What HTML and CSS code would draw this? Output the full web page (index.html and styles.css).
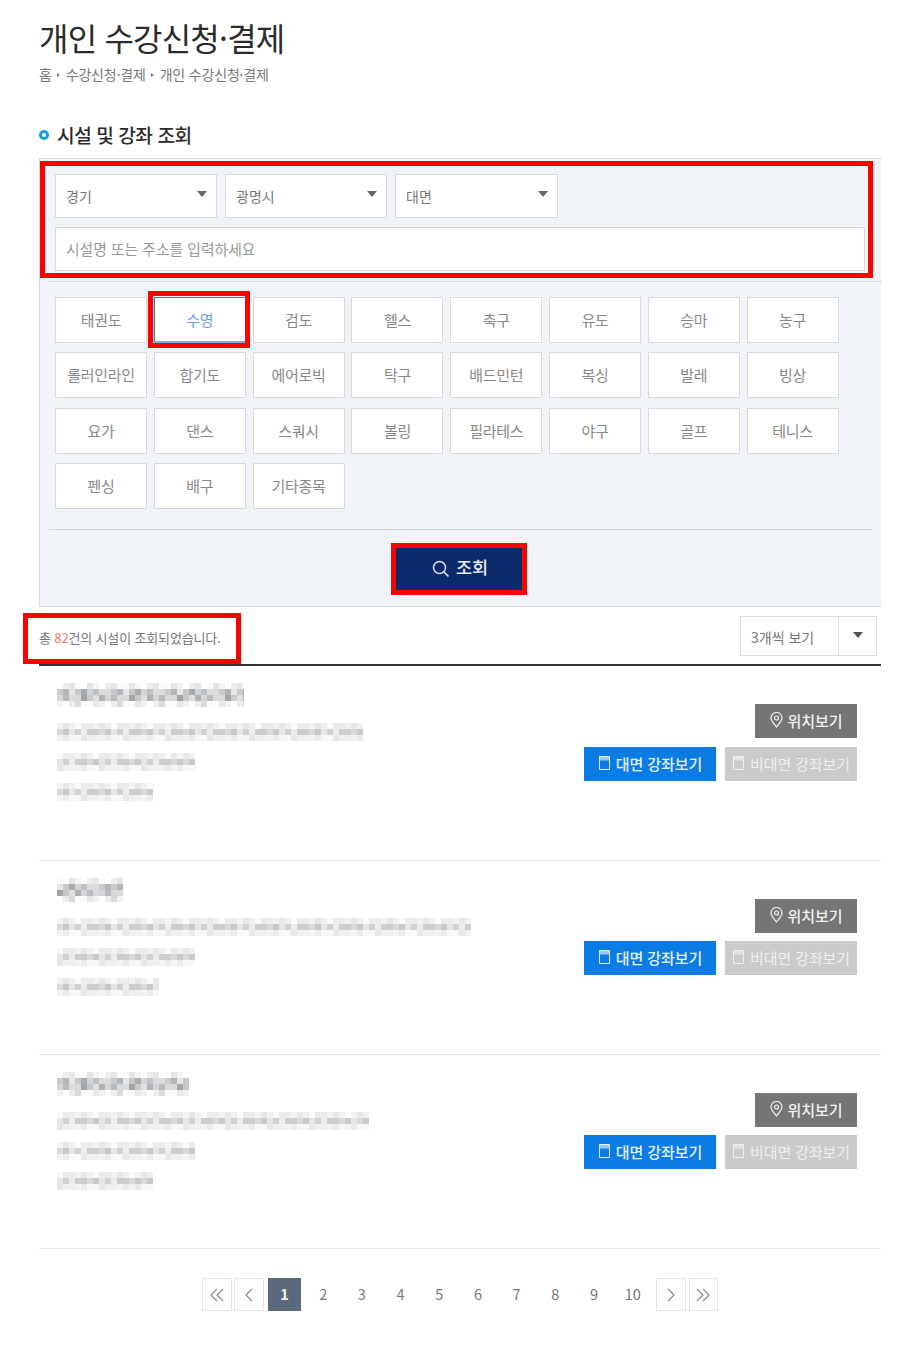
FILE: index.html
```html
<!DOCTYPE html>
<html lang="ko">
<head>
<meta charset="utf-8">
<title>개인 수강신청·결제</title>
<link rel="stylesheet" href="styles.css">
</head>
<body>
<main class="page">
  <h1 class="title">개인 수강신청·결제</h1>
  <nav class="crumbs"><span>홈</span><i class="crumb-arrow"></i><span>수강신청·결제</span><i class="crumb-arrow"></i><span>개인 수강신청·결제</span></nav>
  <h2 class="section"><i class="ring"></i>시설 및 강좌 조회</h2>
  <section class="panel">
    <div class="filters">
      <div class="selects">
        <div class="select s1">경기<i class="caret"></i></div>
        <div class="select s2">광명시<i class="caret"></i></div>
        <div class="select s3">대면<i class="caret"></i></div>
      </div>
      <div class="search">시설명 또는 주소를 입력하세요</div>
      <div class="hl hl-filters"></div>
    </div>
    <div class="rule"></div>
    <div class="sports">
      <button class="sport">태권도</button>
      <button class="sport on">수영<span class="hl hl-sport"></span></button>
      <button class="sport">검도</button>
      <button class="sport">헬스</button>
      <button class="sport">축구</button>
      <button class="sport">유도</button>
      <button class="sport">승마</button>
      <button class="sport">농구</button>
      <button class="sport">롤러인라인</button>
      <button class="sport">합기도</button>
      <button class="sport">에어로빅</button>
      <button class="sport">탁구</button>
      <button class="sport">배드민턴</button>
      <button class="sport">복싱</button>
      <button class="sport">발레</button>
      <button class="sport">빙상</button>
      <button class="sport">요가</button>
      <button class="sport">댄스</button>
      <button class="sport">스쿼시</button>
      <button class="sport">볼링</button>
      <button class="sport">필라테스</button>
      <button class="sport">야구</button>
      <button class="sport">골프</button>
      <button class="sport">테니스</button>
      <button class="sport">펜싱</button>
      <button class="sport">배구</button>
      <button class="sport">기타종목</button>
    </div>
    <div class="rule2"></div>
    <div class="go-row">
      <button class="go">
        <svg class="go-icon" viewBox="0 0 18 18" width="18" height="18"><circle cx="7.500" cy="7.500" r="6" fill="none" stroke="#dfe5ef" stroke-width="1.500"/><path d="M12 12l4.500 4.500" stroke="#dfe5ef" stroke-width="1.600" fill="none"/></svg>
        조회<span class="hl hl-go"></span>
      </button>
    </div>
  </section>
  <div class="summary">
    <p class="count">총 <em>82</em>건의 시설이 조회되었습니다.<span class="hl hl-count"></span></p>
    <div class="perpage"><span class="pp-label">3개씩 보기</span><span class="pp-btn"><i class="caret dark"></i></span></div>
  </div>

  <article class="item first">
    <div class="info">
      <div class="mosaic m-name" style="width:187px"></div>
      <div class="mosaic m-line" style="width:306px"></div>
      <div class="mosaic m-line alt" style="width:138px"></div>
      <div class="mosaic m-line" style="width:96px"></div>
    </div>
    <div class="actions">
      <a class="btn map"><svg class="pin" viewBox="0 0 13 16" width="13" height="16"><path d="M6.500 15C3.500 11 1 8.800 1 6a5.500 5.500 0 0 1 11 0C12 8.800 9.500 11 6.500 15z" fill="none" stroke="currentColor" stroke-width="1.200"/><circle cx="6.500" cy="6" r="2" fill="none" stroke="currentColor" stroke-width="1.200"/></svg>위치보기</a>
      <div class="btn-row">
        <a class="btn live"><svg class="book" viewBox="0 0 13 16" width="13" height="16"><path d="M1.500 1.500h10v13h-10z" fill="none" stroke="currentColor"/><path d="M1.500 1.500h10v4h-10z" fill="currentColor" opacity=".65"/></svg>대면 강좌보기</a>
        <a class="btn off"><svg class="book" viewBox="0 0 13 16" width="13" height="16"><path d="M1.500 1.500h10v13h-10z" fill="none" stroke="currentColor"/><path d="M1.500 1.500h10v4h-10z" fill="currentColor" opacity=".65"/></svg>비대면 강좌보기</a>
      </div>
    </div>
  </article>

  <article class="item">
    <div class="info">
      <div class="mosaic m-name alt" style="width:66px"></div>
      <div class="mosaic m-line" style="width:414px"></div>
      <div class="mosaic m-line alt" style="width:138px"></div>
      <div class="mosaic m-line" style="width:102px"></div>
    </div>
    <div class="actions">
      <a class="btn map"><svg class="pin" viewBox="0 0 13 16" width="13" height="16"><path d="M6.500 15C3.500 11 1 8.800 1 6a5.500 5.500 0 0 1 11 0C12 8.800 9.500 11 6.500 15z" fill="none" stroke="currentColor" stroke-width="1.200"/><circle cx="6.500" cy="6" r="2" fill="none" stroke="currentColor" stroke-width="1.200"/></svg>위치보기</a>
      <div class="btn-row">
        <a class="btn live"><svg class="book" viewBox="0 0 13 16" width="13" height="16"><path d="M1.500 1.500h10v13h-10z" fill="none" stroke="currentColor"/><path d="M1.500 1.500h10v4h-10z" fill="currentColor" opacity=".65"/></svg>대면 강좌보기</a>
        <a class="btn off"><svg class="book" viewBox="0 0 13 16" width="13" height="16"><path d="M1.500 1.500h10v13h-10z" fill="none" stroke="currentColor"/><path d="M1.500 1.500h10v4h-10z" fill="currentColor" opacity=".65"/></svg>비대면 강좌보기</a>
      </div>
    </div>
  </article>

  <article class="item">
    <div class="info">
      <div class="mosaic m-name" style="width:132px"></div>
      <div class="mosaic m-line alt" style="width:312px"></div>
      <div class="mosaic m-line" style="width:138px"></div>
      <div class="mosaic m-line alt" style="width:96px"></div>
    </div>
    <div class="actions">
      <a class="btn map"><svg class="pin" viewBox="0 0 13 16" width="13" height="16"><path d="M6.500 15C3.500 11 1 8.800 1 6a5.500 5.500 0 0 1 11 0C12 8.800 9.500 11 6.500 15z" fill="none" stroke="currentColor" stroke-width="1.200"/><circle cx="6.500" cy="6" r="2" fill="none" stroke="currentColor" stroke-width="1.200"/></svg>위치보기</a>
      <div class="btn-row">
        <a class="btn live"><svg class="book" viewBox="0 0 13 16" width="13" height="16"><path d="M1.500 1.500h10v13h-10z" fill="none" stroke="currentColor"/><path d="M1.500 1.500h10v4h-10z" fill="currentColor" opacity=".65"/></svg>대면 강좌보기</a>
        <a class="btn off"><svg class="book" viewBox="0 0 13 16" width="13" height="16"><path d="M1.500 1.500h10v13h-10z" fill="none" stroke="currentColor"/><path d="M1.500 1.500h10v4h-10z" fill="currentColor" opacity=".65"/></svg>비대면 강좌보기</a>
      </div>
    </div>
  </article>

  <nav class="pager">
    <a class="pg box"><svg viewBox="0 0 16 14" width="16" height="14"><path d="M8 1L2 7l6 6M14 1L8 7l6 6" fill="none" stroke="#888" stroke-width="1.200"/></svg></a>
    <a class="pg box prev"><svg viewBox="0 0 10 14" width="10" height="14"><path d="M8 1L2 7l6 6" fill="none" stroke="#888" stroke-width="1.200"/></svg></a>
    <a class="num cur">1</a><a class="num">2</a><a class="num">3</a><a class="num">4</a><a class="num">5</a><a class="num">6</a><a class="num">7</a><a class="num">8</a><a class="num">9</a><a class="num">10</a>
    <a class="pg box next"><svg viewBox="0 0 10 14" width="10" height="14"><path d="M2 1l6 6-6 6" fill="none" stroke="#888" stroke-width="1.200"/></svg></a>
    <a class="pg box last"><svg viewBox="0 0 16 14" width="16" height="14"><path d="M2 1l6 6-6 6M8 1l6 6-6 6" fill="none" stroke="#888" stroke-width="1.200"/></svg></a>
  </nav>
</main>
</body>
</html>
```
FILE: styles.css
```css
* { box-sizing: border-box; }
html, body { margin: 0; padding: 0; background: #fff; }
body { font-family: "Noto Sans CJK KR", "Noto Sans", sans-serif; color: #333; }
.page { width: 842px; margin-left: 39px; height: 1345px; overflow: visible; }

.title { margin: 0; padding-top: 14px; height: 59px; font-size: 32px; line-height: 46px; font-weight: 400; color: #2b2b2b; letter-spacing: -0.8px; }
.crumbs { display: flex; align-items: center; height: 20px; margin-top: 5px; font-size: 14px; line-height: 20px; color: #777; letter-spacing: -0.180px; }
.crumb-arrow { width: 0; height: 0; margin: 2px 5.500px 0; border-left: 3px solid #777; border-top: 2.500px solid transparent; border-bottom: 2.500px solid transparent; }
.section { display: flex; align-items: center; margin: 36px 0 0; height: 30px; font-size: 19.200px; line-height: 30px; font-weight: 500; color: #2b2b2b; letter-spacing: -0.5px; }
.ring { width: 10px; height: 10px; margin-right: 8px; border: 3px solid #0d9fdb; border-radius: 50%; }

.panel { margin-top: 8px; height: 449px; background: #f0f3f7; border: 1px solid #d5d8dc; border-right: 0; }
.filters { position: relative; height: 122px; padding: 15px 0 0 15px; }
.selects { display: flex; gap: 8px; }
.select { position: relative; height: 44px; padding-left: 10px; background: #fff; border: 1px solid #d9d9d9; font-size: 14px; line-height: 42px; color: #777; }
.s1 { width: 162px; }
.s2 { width: 162px; }
.s3 { width: 163px; }
.caret { position: absolute; top: 16px; right: 9px; width: 0; height: 0; border-top: 6px solid #666; border-left: 5px solid transparent; border-right: 5px solid transparent; }
.search { width: 810px; height: 44px; margin-top: 9px; padding-left: 10px; background: #fff; border: 1px solid #d9d9d9; font-size: 14.800px; line-height: 42px; color: #999; }
.hl { position: absolute; border: 5px solid #fe0000; pointer-events: none; }
.hl-filters { left: 0; top: 2px; width: 833px; height: 117px; }
.rule { height: 1px; margin-left: 9px; width: 833px; background: #d5d8dc; }

.sports { display: grid; grid-template-columns: repeat(8, 92px); column-gap: 6.800px; row-gap: 9.400px; padding: 15px 0 0 15px; height: 247px; align-content: start; }
.sport { position: relative; height: 46px; padding: 0; background: #fff; border: 1px solid #d9d9d9; font: 15px/44px "Noto Sans CJK KR", sans-serif; color: #888; letter-spacing: -0.3px; }
.sport.on { color: #6a9fe4; border: 1px solid #2a7fd5; border-bottom: 2px solid #6fb0ee; }
.hl-sport { left: -7px; top: -7px; width: 102px; height: 57px; }
.rule2 { width: 823px; height: 1px; margin-left: 9px; background: #cfd2d6; }

.go-row { display: flex; justify-content: center; padding-top: 18px; }
.go { position: relative; display: flex; align-items: center; justify-content: center; gap: 6px; width: 126px; height: 42px; padding: 0 0 6px 8px; margin-left: -3px; background: #0a2a6b; border: 0; color: #e9edf5; font: 500 17.500px "Noto Sans CJK KR", sans-serif; }
.go-icon { transform: translateY(3px); }
.hl-go { left: -5px; top: -5px; width: 136px; height: 52px; }

.summary { position: relative; display: flex; justify-content: space-between; align-items: flex-start; height: 59px; border-bottom: 2px solid #333; }
.count { position: relative; margin: 0; padding-top: 21px; font-size: 13px; line-height: 20px; color: #777; letter-spacing: -0.150px; }
.count em { font-style: normal; color: #f47a5c; }
.hl-count { left: -16px; top: 6px; width: 218px; height: 51px; }
.perpage { display: flex; margin: 9px 4px 0 0; height: 40px; border: 1px solid #dcdcdc; font-size: 14px; line-height: 40px; color: #777; }
.pp-label { width: 98px; padding-left: 10px; border-right: 1px solid #dcdcdc; }
.pp-btn { position: relative; width: 37px; }
.caret.dark { top: 15px; right: 13px; border-top-color: #555; }

.item { display: flex; justify-content: space-between; height: 194px; padding: 0 24px 0 18px; border-bottom: 1px solid #e4e4e4; }
.item.first { height: 195px; }
.info { padding-top: 17px; }
.mosaic { margin-bottom: 12px; background-repeat: repeat-x; filter: blur(0.6px); }
.m-name { height: 24px; margin-bottom: 16px;
  background-image:
    repeating-linear-gradient(90deg, #fff 0 6px, #eee 6px 12px, #e6e6e8 12px 18px, #fbfbfb 18px 30px, #e4e5e7 30px 36px, #f4f4f4 36px 42px),
    repeating-linear-gradient(90deg, #c9cacc 0 6px, #b4b6b9 6px 12px, #e5e6e8 12px 18px, #ccc8c6 18px 24px, #a8acb2 24px 30px, #d2d4d6 30px 36px, #bfc2c4 36px 42px, #dcdcdc 42px 54px),
    repeating-linear-gradient(90deg, #d5d5d7 0 6px, #b9bcbe 6px 12px, #d9dadc 12px 24px, #a4a6aa 24px 30px, #c6c9cc 30px 36px, #e0dfdd 36px 42px, #afb3b7 42px 48px),
    repeating-linear-gradient(90deg, #f1f1f1 0 6px, #fff 6px 12px, #ededed 12px 18px, #d9dadc 18px 24px, #fafafa 24px 36px, #e8e8e8 36px 42px);
  background-size: 100% 6px;
  background-position: 0 0, 0 6px, 0 12px, 0 18px;
  background-repeat: repeat-x;
}
.m-line { height: 18px;
  background-image:
    repeating-linear-gradient(90deg, #f2f2f2 0 6px, #e6e7e8 6px 12px, #f0f0f0 12px 18px, #fafafa 18px 24px, #ebebec 24px 36px),
    repeating-linear-gradient(90deg, #d9d9da 0 6px, #c8c9cb 6px 12px, #e5e5e6 12px 18px, #d0d1d3 18px 24px, #ececed 24px 30px, #cccdcf 30px 42px),
    repeating-linear-gradient(90deg, #f3f3f3 0 6px, #ebebec 6px 12px, #f7f7f7 12px 24px, #e7e7e8 24px 30px, #f0f0f0 30px 42px);
  background-size: 100% 6px;
  background-position: 0 0, 0 6px, 0 12px;
  background-repeat: repeat-x;
}
.m-name.alt, .m-line.alt { background-position: -18px 0, -12px 6px, -24px 12px, -6px 18px; }
.actions { display: flex; flex-direction: column; align-items: flex-end; padding-top: 38px; }
.btn { display: flex; align-items: center; justify-content: center; gap: 5px; height: 34px; padding-bottom: 2px; font-size: 15px; font-weight: 500; letter-spacing: -0.1px; }
.map { width: 102px; background: #757575; color: #f1f1f1; }
.btn-row { display: flex; gap: 9px; margin-top: 8px; }
.first .btn-row { margin-top: 9px; }
.live { width: 132px; background: #0b7ce4; color: #e8f2fd; }
.off { width: 132px; background: #cbcbcb; color: #efefef; font-weight: 400; }

.pager { display: flex; align-items: center; justify-content: flex-start; margin: 29px 0 0 163px; height: 33px; }
.pg { display: flex; align-items: center; justify-content: center; }
.box { width: 30px; height: 33px; border: 1px solid #e2e2e2; }
.prev { margin-left: 2px; margin-right: 4px; }
.next { margin-left: 1px; margin-right: 3px; }
.last { width: 29px; }
.num { width: 33px; height: 33px; margin-right: 5.700px; font-size: 14.500px; line-height: 32px; text-align: center; color: #777; }
.num.cur { background: #5a697c; color: #f3f5f8; font-weight: 700; }
```
